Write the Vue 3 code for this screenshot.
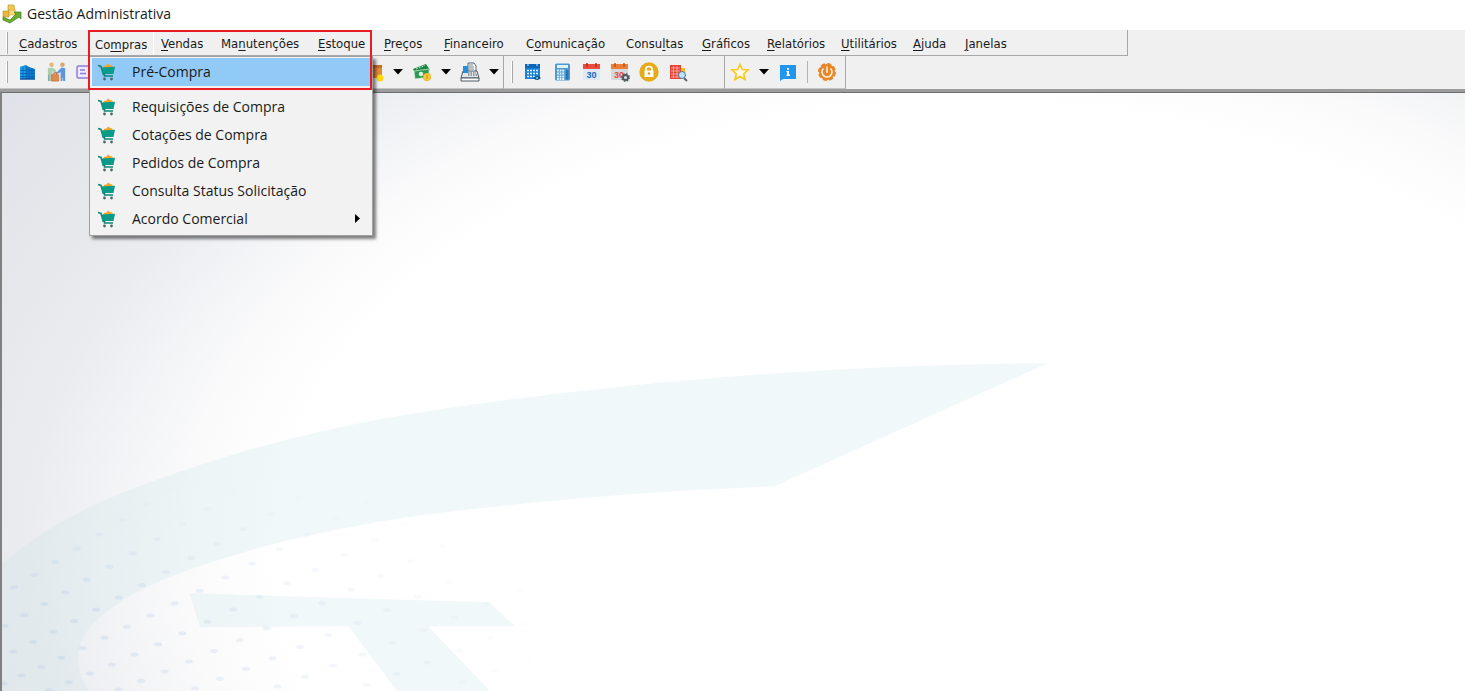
<script setup>
const menus = [
  ['', 'C', 'adastros'], ['Co', 'm', 'pras'], ['', 'V', 'endas'], ['Ma', 'n', 'utenções'],
  ['', 'E', 'stoque'], ['', 'P', 'reços'], ['', 'F', 'inanceiro'], ['C', 'o', 'municação'],
  ['Consu', 'l', 'tas'], ['', 'G', 'ráficos'], ['', 'R', 'elatórios'], ['', 'U', 'tilitários'],
  ['', 'A', 'juda'], ['', 'J', 'anelas'],
].map(([pre, key, post]) => ({ pre, key, post, open: key === 'm' }))

const entries = [
  { label: 'Pré-Compra', active: true },
  { label: 'Requisições de Compra' },
  { label: 'Cotações de Compra' },
  { label: 'Pedidos de Compra' },
  { label: 'Consulta Status Solicitação' },
  { label: 'Acordo Comercial', sub: true },
]

// Perspective dot lattice in the lower left corner of the wallpaper
const dots = []
for (let i = -4; i <= 11; i++) {
  for (let j = -3; j <= 12; j++) {
    const x = (234 + 60 * i + 1.1 * i * i + j * (82 + 2.3 * i)) / 2.8
    const y = (863 - 30 * i - 0.87 * i * i + j * (49 + 1.45 * i)) / 3 + 267
    const o = Math.min(1, 1.15 - x / 500) * Math.min(1, (y - 385) / 120)
    if (x > 3 && x < 530 && y < 602 && o > 0.03) dots.push({ x, y, o })
  }
}
</script>

<template>
  <div class="app">
    <header class="title">
      <svg class="logo" viewBox="0 0 20 20" aria-hidden="true">
        <path d="M6 1h6l1 6H6z" fill="#f2c94f" stroke="#b98a2c" stroke-width=".6" />
        <path d="M1 7h6v6H1z" fill="#e9b73a" stroke="#b98a2c" stroke-width=".6" />
        <path d="M7 6h6v5H7z" fill="#f7dc7c" stroke="#c79a3a" stroke-width=".5" />
        <path d="M1 13l7 3 6-6-2-2h7v7l-2-2-9 6-7-3z" fill="#6cae2c" stroke="#3f7d22" stroke-width=".7" />
      </svg>
      <span>Gestão Administrativa</span>
    </header>

    <div class="bars">
      <nav class="menubar" aria-label="Menu principal">
        <i class="grip"></i>
        <button v-for="m in menus" :key="m.post" type="button" class="menu" :class="{ open: m.open }">{{ m.pre }}<u>{{ m.key }}</u>{{ m.post }}</button>
      </nav>

      <div class="toolbars">
        <div class="toolbar main">
          <i class="grip"></i>
          <div class="set">
            <button type="button" aria-label="Empresas">
              <svg viewBox="0 0 20 20"><path d="M2 5l6-2 3 2 6 2v10H2z" fill="#0d7fd6" /><path d="M2 5l6-2v14H2z" fill="#1aa0e8" /><path d="M2 8.500h15M2 11.500h15M2 14.500h15M5 5v12M8 4v13M11 5v12M14 6v11" stroke="#0a5fae" stroke-width=".8" /><path d="M2 17h15" stroke="#064f96" stroke-width="1.400" /></svg>
            </button>
            <button type="button" aria-label="Clientes">
              <svg viewBox="0 0 22 22"><circle cx="5" cy="3" r="2.500" fill="#e5b87e" /><circle cx="17" cy="3" r="2.500" fill="#d9a66f" /><path d="M1 7l4-1 4 2 2 4-2 1-3-3v11H1z" fill="#a9cfae" /><path d="M20 7l-4-1-3 3-3 3 2 1 3-2v10h2v-5l1 5h2z" fill="#5e94d8" /><path d="M2 14v7M6 14v7" stroke="#7790b0" /><path d="M5 14h8v7H5z" fill="#e28a4c" stroke="#c86a38" stroke-width=".7" /><path d="M7.500 14v-2h3v2" fill="none" stroke="#b85c36" /></svg>
            </button>
            <button type="button" aria-label="Cadastro">
              <svg viewBox="0 0 20 20"><rect x="1" y="4" width="17" height="12" rx="1.500" fill="#eeebff" stroke="#8c7edb" stroke-width="1.500" /><path d="M4 8h5M4 11.500h6" stroke="#8c7edb" stroke-width="1.300" /></svg>
            </button>
          </div>
          <div class="set finance">
            <button type="button" aria-label="Estoque">
              <svg viewBox="0 0 20 20"><path d="M1 3h17v13H1z" fill="#e48b36" /><path d="M1 3h17v3H1z" fill="#c96f25" /><circle cx="16" cy="16" r="3.500" fill="#fbd913" /></svg>
            </button>
            <button type="button" class="arrow" aria-label="Mais opções de estoque"><svg viewBox="0 0 10 6"><path d="M0 0h10L5 5.500z" fill="#000" /></svg></button>
            <button type="button" aria-label="Pagamentos">
              <svg viewBox="0 0 20 20"><path d="M1 7l13-5 4 6-14 5z" fill="#188342" /><path d="M2 9l15-2v8L3 17z" fill="#2c9a52" stroke="#d8efdd" stroke-width=".7" /><circle cx="9" cy="12" r="2.300" fill="#dcf2df" /><path d="M4 7l9-3.500" stroke="#bfe8c8" stroke-dasharray="2 1" /><circle cx="15" cy="15" r="3.800" fill="#f7c93a" stroke="#e7a91f" stroke-width=".7" /><path d="M15 13v4" stroke="#ce8c13" /></svg>
            </button>
            <button type="button" class="arrow" aria-label="Mais opções de pagamentos"><svg viewBox="0 0 10 6"><path d="M0 0h10L5 5.500z" fill="#000" /></svg></button>
            <button type="button" aria-label="Caixa">
              <svg viewBox="0 0 20 20"><path d="M8 9V1h6l2 3v5" fill="#fff" stroke="#53616e" /><path d="M9 3h4M9 5h5M9 7h5" stroke="#53616e" stroke-width=".8" /><path d="M3 9h14l2 7H1z" fill="#e2e5e9" stroke="#4d5965" /><path d="M8 11h8M8 13h9" stroke="#4d5965" stroke-dasharray="1.500 1" /><path d="M3 4h5v7H3z" fill="#1e90e0" /><path d="M1 16h18v3H1z" fill="#fff" stroke="#4d5965" /></svg>
            </button>
            <button type="button" class="arrow" aria-label="Mais opções de caixa"><svg viewBox="0 0 10 6"><path d="M0 0h10L5 5.500z" fill="#000" /></svg></button>
          </div>
        </div>

        <div class="toolbar tools">
          <i class="grip"></i>
          <div class="set wide">
            <button type="button" aria-label="Agenda">
              <svg viewBox="0 0 20 20"><path d="M2 2h15v15H2z" fill="#1683d8" /><path d="M2 2h15v4H2z" fill="#0c65b5" /><path d="M4 8.500h11M4 11.500h11M4 14.500h8" stroke="#e6f5ff" stroke-width="1.500" stroke-dasharray="2 1" /><path d="M5 1v3M14 1v3" stroke="#d6ecfc" /><path d="M10 16q4-4 8 0-4 4-8 0" fill="#135789" /><circle cx="14" cy="16" r="1" fill="#6ed0f4" /></svg>
            </button>
            <button type="button" aria-label="Calculadora">
              <svg viewBox="0 0 20 20"><rect x="3" y="1.500" width="15" height="17" rx="1.500" fill="#4b9ad6" /><path d="M5 3h11v3H5z" fill="#e3f2fb" /><path d="M5 8.500h8M5 11.500h8M5 14.500h8M5 17h8" stroke="#e8f5fd" stroke-width="1.800" stroke-dasharray="1.800 .8" /><path d="M14 8h2.500v9.500H14z" fill="#2a73b4" /></svg>
            </button>
            <button type="button" aria-label="Calendário">
              <svg viewBox="0 0 20 20"><rect x="2" y="2" width="17" height="16" rx="1" fill="#dfe9f6" /><path d="M2 2h17v5H2z" fill="#ed4c3c" /><path d="M6 1v4M15 1v4" stroke="#b23028" stroke-width="1.500" /><text x="10.500" y="15.500" text-anchor="middle" font-size="9" font-weight="700" fill="#1767c0">30</text></svg>
            </button>
            <button type="button" aria-label="Configurar calendário">
              <svg viewBox="0 0 20 20"><rect x="1" y="2" width="17" height="16" rx="1" fill="#d4d9de" /><path d="M1 2h17v5H1z" fill="#ef7e35" /><path d="M5 1v4M14 1v4" stroke="#b95423" stroke-width="1.500" /><text x="9" y="15.500" text-anchor="middle" font-size="9" font-weight="700" fill="#e24c36">30</text><circle cx="15.500" cy="15.500" r="2.500" fill="#dfe4e8" stroke="#4e5960" stroke-width="2" /><circle cx="15.500" cy="15.500" r="3.800" fill="none" stroke="#4e5960" stroke-width="1.300" stroke-dasharray="1.500 1.500" /></svg>
            </button>
            <button type="button" aria-label="Bloquear">
              <svg viewBox="0 0 20 20"><circle cx="10" cy="10" r="9.700" fill="#e6ab1a" /><path d="M7 9V7q0-2.500 3-2.500T13 7v2" fill="none" stroke="#fff" stroke-width="1.600" /><path d="M5.500 8.500h9V15h-9z" fill="#fff" /><circle cx="10" cy="11.500" r="1.200" fill="#d99c0f" /></svg>
            </button>
            <button type="button" aria-label="Pesquisar">
              <svg viewBox="0 0 20 20"><path d="M13 6h4v8h-4z" fill="#f5bd24" /><path d="M2 3h11v14H2z" fill="#e64335" /><path d="M3 6h9M3 9h9M3 12h9M3 15h9M5.500 4v12M9 4v12" stroke="#ffc3b8" stroke-width=".7" /><path d="M16 16l3 3" stroke="#596069" stroke-width="1.800" /><circle cx="14" cy="13" r="3.500" fill="#bde4fa" stroke="#4b7895" /></svg>
            </button>
          </div>
        </div>

        <div class="toolbar quick">
          <button type="button" aria-label="Favoritos">
            <svg viewBox="0 0 20 20"><path d="M10 2.500l2.300 5 5.700.5-4.300 4 1.300 5.500-5-3-5 3L6.300 12 2 8l5.700-.5z" fill="#fffbea" stroke="#fbc81d" stroke-width="1.700" /></svg>
          </button>
          <button type="button" class="arrow" aria-label="Mais favoritos"><svg viewBox="0 0 10 6"><path d="M0 0h10L5 5.500z" fill="#000" /></svg></button>
          <button type="button" aria-label="Informações">
            <svg viewBox="0 0 20 20"><path d="M2 3h16v14H5l-3 2z" fill="#2196ee" /><path d="M9 6h2v1.700H9zM8.500 9H11v3.500h1V14H8.500v-1.500H9V10h-.5z" fill="#fff" /></svg>
          </button>
          <i class="rule"></i>
          <button type="button" aria-label="Sair">
            <svg viewBox="0 0 20 20"><circle cx="10" cy="10" r="8" fill="#e98427" /><circle cx="10" cy="10" r="8.300" fill="none" stroke="#e98427" stroke-width="1.400" stroke-dasharray="4.300 2.200" /><path d="M6.500 6.500a5 5 0 1 0 7 0M10 4.500V11" fill="none" stroke="#fff0df" stroke-width="1.600" /></svg>
          </button>
        </div>
      </div>

      <ul class="dropdown" role="menu">
        <li v-for="e in entries" :key="e.label" role="none">
          <button type="button" role="menuitem" class="entry" :class="{ active: e.active }">
            <svg class="cart" viewBox="0 0 18 18" aria-hidden="true">
              <path d="M5 5l1.500-2.500L8 3l2-2.500L12 2l2 .5L15.500 5z" fill="#f5a42a" />
              <path d="M0 2.500l3 1L5.500 12" fill="none" stroke="#0c8578" stroke-width="1.600" />
              <path d="M3 4.500l14-.7L15.500 11H5z" fill="#0b9b8a" />
              <path d="M5 11h1.500v2H15" fill="none" stroke="#0c8578" stroke-width="1.500" />
              <circle cx="6.500" cy="16" r="1.400" fill="#4b6968" /><circle cx="13.500" cy="16" r="1.400" fill="#4b6968" />
            </svg>
            <span>{{ e.label }}</span>
            <svg v-if="e.sub" class="more" viewBox="0 0 5 9" aria-hidden="true"><path d="M0 0l5 4.500L0 9z" fill="#000" /></svg>
          </button>
        </li>
      </ul>
      <div class="marker"></div>
    </div>

    <main class="desk">
      <svg class="art" viewBox="0 0 1462 598" preserveAspectRatio="xMinYMin slice" aria-hidden="true">
        <g fill="#c3e0e8" fill-opacity=".24">
          <path d="M0 470Q38 438 87 414C145 388 220 363 294 344C378 323 465 311 558 300C720 281 880 271 1045 270L772 393C700 396 630 400 558 407C510 411 465 416 419 422C375 428 330 437 291 446C240 458 190 474 155 489C110 509 76 535 76 564C76 576 80 588 87 598H0z" />
          <path d="M187 500L487 509 513 533H426L488 598H395L346 533 198 534z" />
        </g>
        <ellipse v-for="(d, n) in dots" :key="n" :cx="d.x - 3" :cy="d.y" rx="4" ry="2" fill="#b7cde6" :fill-opacity="d.o * 0.35" />
      </svg>
    </main>
  </div>
</template>

<style>
body {
  margin: 0;
}
</style>

<style scoped>
.app {
  display: flex;
  flex-direction: column;
  min-height: 100vh;
  background: #fff;
  color: #1a1a1a;
  font-family: "Noto Sans", "Open Sans", sans-serif;
}
button {
  margin: 0;
  padding: 0;
  border: 0;
  background: none;
  color: inherit;
  font: inherit;
}
.title {
  display: flex;
  align-items: center;
  gap: 5px;
  box-sizing: border-box;
  height: 30px;
  padding: 0 2px 3px;
  font-family: "Open Sans", sans-serif;
  font-size: 14px;
}
.logo {
  width: 20px;
  height: 20px;
}
.bars {
  position: relative;
  background: #f0f0f0;
  border-bottom: 3px solid #9c9c9c;
}
.menubar {
  display: grid;
  grid-template-columns: 13px 76px 66px 60px 97px 66px 60px 82px 100px 76px 65px 74px 72px 52px 1fr;
  box-sizing: border-box;
  width: 77%;
  height: 26px;
  padding-left: 6px;
  border-right: 1px solid #a8a8a8;
  border-bottom: 1px solid #a8a8a8;
  font-family: "DejaVu Sans Condensed", "DejaVu Sans", sans-serif;
  font-size: 13px;
}
.grip {
  width: 1px;
  height: 22px;
  align-self: center;
  background: #a8a8a8;
  border-left: 1px solid #fff;
}
.menu {
  padding-top: 2px;
  text-align: left;
  white-space: nowrap;
}
.menu.open {
  margin-right: 7px;
  padding-top: 4px;
  border-right: 1px solid #fff;
}
u {
  text-underline-offset: 2px;
}
.toolbars {
  display: flex;
  height: 33px;
}
.toolbar {
  display: flex;
  align-items: center;
  box-sizing: border-box;
  padding-left: 6px;
  border-right: 1px solid #a8a8a8;
  border-bottom: 1px solid #c4c4c4;
}
.main {
  width: 504px;
}
.main .grip {
  margin-right: 10px;
}
.tools {
  width: 221px;
  padding-left: 7px;
}
.quick {
  width: 121px;
  gap: 9px;
  padding: 0 6px 0 5px;
}
.set {
  display: flex;
  align-items: center;
  gap: 9px;
}
.finance {
  margin-left: auto;
  padding-right: 4px;
}
.tools .set {
  padding-left: 10px;
}
.toolbar button {
  display: flex;
}
.toolbar svg {
  width: 20px;
  height: 20px;
  font-family: "Liberation Sans", sans-serif;
}
.toolbar .arrow svg {
  width: 10px;
  height: 6px;
}
.rule {
  width: 1px;
  height: 22px;
  background: #b4b4b4;
}
.dropdown {
  position: absolute;
  top: 26px;
  left: 89px;
  z-index: 2;
  box-sizing: border-box;
  width: 284px;
  margin: 0;
  padding: 1px 2px 2px;
  border: 1px solid #a0a0a0;
  background: #f2f2f2;
  box-shadow: 3px 3px 3px rgba(0, 0, 0, 0.5);
  list-style: none;
  font-family: "Open Sans", sans-serif;
  font-size: 14px;
}
.entry {
  display: flex;
  align-items: center;
  gap: 16px;
  box-sizing: border-box;
  width: 100%;
  height: 28px;
  padding: 0 10px 1px 6px;
  text-align: left;
}
.entry.active {
  margin-bottom: 7px;
  background: #91c9f7;
}
.cart {
  width: 18px;
  height: 18px;
}
.more {
  width: 5px;
  height: 9px;
  margin-left: auto;
}
.marker {
  position: absolute;
  top: 0;
  left: 88px;
  z-index: 3;
  box-sizing: border-box;
  width: 284px;
  height: 60px;
  border: 2px solid #e81c24;
  pointer-events: none;
}
.desk {
  display: flex;
  flex: 1;
  border-top: 1px solid #6e6e6e;
  border-left: 2px solid #808080;
  background: radial-gradient(ellipse 1380px 890px at 968px 457px, #fff 50%, #fafafb 57%, #f3f4f6 62%, #ebecf0 68%, #e7e8ec 74%, #dfe2e8 87%);
}
.art {
  width: 100%;
  height: 598px;
}
</style>
